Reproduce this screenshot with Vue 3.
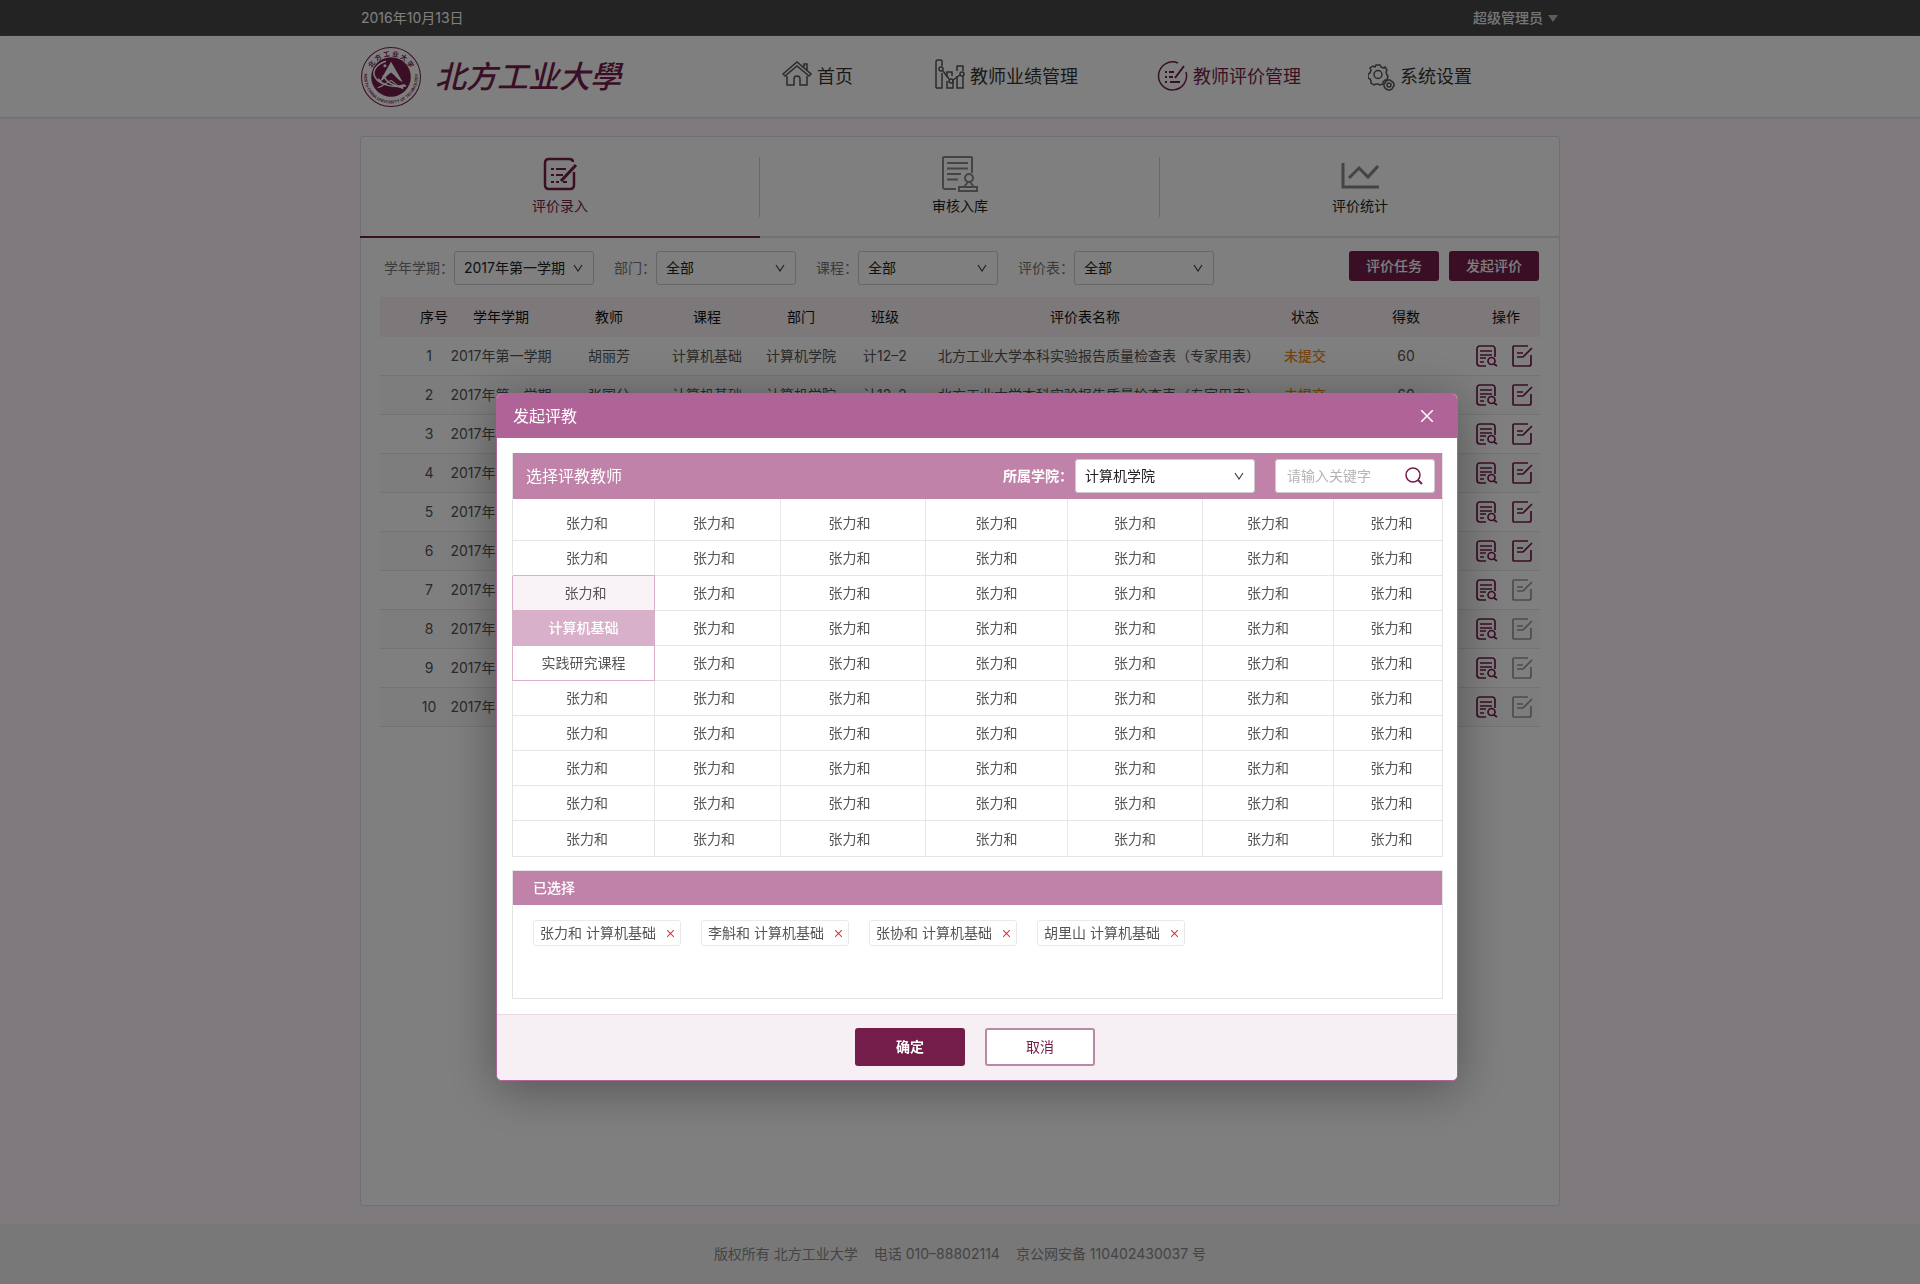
<script setup>
import { ref } from 'vue'

const nav = [
  { key: 'home', label: '首页' },
  { key: 'chart', label: '教师业绩管理' },
  { key: 'check', label: '教师评价管理', active: true },
  { key: 'gear', label: '系统设置' }
]

const filters = [
  { id: 'term', label: '学年学期：', value: '2017年第一学期' },
  { id: 'dept', label: '部门：', value: '全部' },
  { id: 'course', label: '课程：', value: '全部' },
  { id: 'form', label: '评价表：', value: '全部' }
]

const heads = ['序号', '学年学期', '教师', '课程', '部门', '班级', '评价表名称', '状态', '得数', '操作']
const detail = {
  course: '计算机基础',
  dept: '计算机学院',
  klass: '计12–2',
  form: '北方工业大学本科实验报告质量检查表（专家用表）',
  status: '未提交',
  score: 60
}
const records = [
  { teacher: '胡丽芳', ...detail },
  { teacher: '张国兮', ...detail }
]
const rows = Array.from({ length: 10 }, (_, i) => ({
  no: i + 1,
  term: '2017年第一学期',
  editable: i < 6,
  ...records[i]
}))

const grid = Array.from({ length: 10 }, () => Array(7).fill('张力和'))
grid[3][0] = '计算机基础'
grid[4][0] = '实践研究课程'
const cellClass = (r, c) => {
  if (c !== 0 || r < 2 || r > 4) return ''
  return ['menu open', 'menu current', 'menu'][r - 2]
}

const picked = ['张力和', '李斛和', '张协和', '胡里山']
const keyword = ref('')
</script>

<template>
  <div class="page">
    <div class="topbar">
      <div class="wrap topbar-in">
        <span>2016年10月13日</span>
        <button class="user" type="button">超级管理员<i class="caret"></i></button>
      </div>
    </div>

    <header class="header">
      <div class="wrap header-in">
        <a class="brand" href="#">
          <svg class="seal" viewBox="0 0 120 122">
            <defs>
              <path id="arc-top" d="M19 61a41 41 0 0 1 82 0" />
              <path id="arc-bottom" d="M8 50a53 53 0 1 0 104 0" />
            </defs>
            <circle cx="60" cy="61" r="58" fill="none" stroke="#741d4a" stroke-width="2" />
            <circle cx="60" cy="61" r="39" fill="#741d4a" />
            <path d="M60 31L38 70c8-3 12-10 16-13l6-5 6 5c4 4 8 10 17 14z" fill="#fff" />
            <path d="M50 30c-20 6-27 20-22 30 6 14 32 24 62 18M35 64c6 12 28 20 52 12M44 58c8 14 22 22 40 24" fill="none" stroke="#fff" stroke-width="3" />
            <path d="M34 82c14-4 18-12 26-14 8 4 12 12 24 16" fill="none" stroke="#fff" stroke-width="2" />
            <circle cx="48" cy="39" r="3" fill="#fff" />
            <text font-size="13" font-weight="700" fill="#741d4a"><textPath href="#arc-top" startOffset="50%" text-anchor="middle">北 方 工 业 大 学</textPath></text>
            <text font-size="8" font-weight="600" fill="#741d4a"><textPath href="#arc-bottom" startOffset="50%" text-anchor="middle">NORTH CHINA UNIVERSITY OF TECHNOLOGY</textPath></text>
          </svg>
          <span class="brand-name">北方工业大學</span>
        </a>
        <nav class="nav">
          <a v-for="n in nav" :key="n.key" href="#" :class="[n.key, { active: n.active }]">
            <svg v-if="n.key === 'home'" width="30" height="32" viewBox="0 0 30 32">
              <path d="M1 13L15 1l14 12-2 2L15 5 3 15zM22 6V3h3v6M5 15v9h7v-6a3 3 0 0 1 6 0v6h7v-9" />
            </svg>
            <svg v-else-if="n.key === 'chart'" width="30" height="36" viewBox="0 0 30 36">
              <path d="M1 29V3a2 2 0 0 1 2-2h3a1 1 0 0 1 1 1v5M7 14v15H1M12 18v-5h5v4M12 22v7h6v-7M22 12V7h6v5M22 17v12h6V17" />
              <circle cx="6" cy="10" r="2" /><circle cx="16" cy="22" r="2" /><circle cx="27" cy="15" r="2" />
              <path d="M8 12l6 8M18 21l7-5" />
            </svg>
            <svg v-else-if="n.key === 'check'" width="31" height="32" viewBox="0 0 31 32">
              <path d="M21 2A14 14 0 1 0 29 11" />
              <path d="M8 11h2M12 11h5M8 16h2M12 16h4M8 21h2M13 21h10M18 17L27 5" stroke-width="2" />
            </svg>
            <svg v-else width="27" height="27" viewBox="0 0 27 27">
              <path d="M8 1h4l1 2 2 1 2-1 2 3-1 2 1 3 1 1-1 4-2 0-2 2 0 2-3 1-2-1h-2l-2 1-3-2 0-2-1-2-2-1 0-4 2-1 1-3-1-2 3-2 2 1z" />
              <circle cx="10" cy="10.500" r="4" />
              <path d="M20 16h2l1 1 2 1 1 2v2l-1 1-1 2-2 1h-2l-2-1-1-1-1-2v-2l1-1 1-2z" />
              <circle cx="21" cy="21" r="2" />
            </svg>
            <span>{{ n.label }}</span>
          </a>
        </nav>
      </div>
    </header>

    <main class="wrap main">
      <section class="card">
        <div class="tabs">
          <a class="tab on" href="#">
            <svg width="36" height="36" viewBox="0 0 36 36" fill="none" stroke="#741d4a">
              <path d="M31 6Q31 3 27 3H7Q3 3 3 7v22q0 4 4 4h21q4 0 4-4V16" stroke-width="2.500" />
              <path d="M9 13h3M14 13h10M9 19h3M14 19h7M9 26h3M14 26h3M21 26h4" stroke-width="2" />
              <path d="M34 9L19 25" stroke-width="3" />
            </svg>
            <span>评价录入</span>
          </a>
          <a class="tab" href="#">
            <svg width="36" height="36" viewBox="0 0 36 36" fill="none" stroke="#888" stroke-width="2">
              <path d="M14 33H3q-2 0-2-2V2q0-1 1-1h27q1 0 1 1v15M5 7h21M5 12.500h21M5 18h14M5 23.500h11" />
              <circle cx="27" cy="22" r="4" />
              <path d="M26 26l-4 5M28 26l4 5M17 31h18v4H17z" />
            </svg>
            <span>审核入库</span>
          </a>
          <a class="tab" href="#">
            <svg width="38" height="36" viewBox="0 0 38 36" fill="none" stroke="#888" stroke-width="3">
              <path d="M2 7v24h36M8 22l10-10 9 9L37 10" />
            </svg>
            <span>评价统计</span>
          </a>
        </div>

        <div class="filters">
          <div v-for="f in filters" :key="f.id" class="field">
            <label :for="f.id">{{ f.label }}</label>
            <select :id="f.id"><option>{{ f.value }}</option></select>
          </div>
          <div class="actions">
            <button type="button">评价任务</button>
            <button type="button">发起评价</button>
          </div>
        </div>

        <table class="list">
          <colgroup>
            <col class="w1" /><col class="w2" /><col class="w3" /><col class="w4" /><col class="w5" />
            <col class="w6" /><col /><col class="w8" /><col class="w9" /><col class="w10" />
          </colgroup>
          <thead>
            <tr><th v-for="h in heads" :key="h">{{ h }}</th></tr>
          </thead>
          <tbody>
            <tr v-for="r in rows" :key="r.no">
              <td>{{ r.no }}</td>
              <td>{{ r.term }}</td>
              <td>{{ r.teacher }}</td>
              <td>{{ r.course }}</td>
              <td>{{ r.dept }}</td>
              <td>{{ r.klass }}</td>
              <td>{{ r.form }}</td>
              <td class="pending">{{ r.status }}</td>
              <td>{{ r.score }}</td>
              <td>
                <div class="ops">
                  <button type="button" aria-label="查看">
                    <svg width="22" height="22" viewBox="0 0 22 22">
                      <path d="M19 12V4q0-3-3-3H4Q1 1 1 4v14q0 3 3 3h6M4 6h12M4 10h12M4 13h6M4 17h4" />
                      <circle cx="15.500" cy="16" r="3.500" /><path d="M18 19l3 2" />
                    </svg>
                  </button>
                  <button type="button" aria-label="编辑" :class="{ off: !r.editable }">
                    <svg width="22" height="22" viewBox="0 0 22 22">
                      <path d="M16 1H2Q1 1 1 2v18q0 1 1 1h15q2 0 2-2V10M5 8h6M5 12h6L20 3" />
                    </svg>
                  </button>
                </div>
              </td>
            </tr>
          </tbody>
        </table>
      </section>
    </main>

    <footer class="footer">
      <span>版权所有 北方工业大学</span><span>电话 010–88802114</span><span>京公网安备 110402430037 号</span>
    </footer>

    <div class="mask">
      <div class="dialog" role="dialog" aria-labelledby="dialog-title">
        <div class="dialog-head">
          <h2 id="dialog-title">发起评教</h2>
          <button type="button" aria-label="关闭">
            <svg width="12" height="12" viewBox="0 0 12 12"><path d="M0 0l12 12M12 0L0 12" stroke="#fff" stroke-width="1.500" /></svg>
          </button>
        </div>

        <div class="dialog-body">
          <section class="panel">
            <div class="panel-head">
              <h3>选择评教教师</h3>
              <label for="college">所属学院：</label>
              <select id="college"><option>计算机学院</option></select>
              <div class="search">
                <input v-model="keyword" type="text" placeholder="请输入关键字" aria-label="请输入关键字" />
                <button type="button" aria-label="搜索">
                  <svg width="18" height="18" viewBox="0 0 18 18" fill="none" stroke="#741d4a">
                    <circle cx="8" cy="8" r="7" stroke-width="1.500" /><path d="M13 13l4 4" stroke-width="2" />
                  </svg>
                </button>
              </div>
            </div>
            <table class="pick">
              <colgroup>
                <col class="p1" /><col class="p2" /><col class="p3" /><col class="p4" /><col class="p5" /><col class="p6" /><col />
              </colgroup>
              <tbody>
                <tr v-for="(line, r) in grid" :key="r">
                  <td v-for="(name, c) in line" :key="c" :class="cellClass(r, c)">{{ name }}</td>
                </tr>
              </tbody>
            </table>
          </section>

          <section class="panel chosen">
            <h3>已选择</h3>
            <ul>
              <li v-for="p in picked" :key="p">
                <span>{{ p }} 计算机基础</span>
                <button type="button" aria-label="移除">
                  <svg width="7" height="7" viewBox="0 0 8 8"><path d="M0 0l8 8M8 0L0 8" stroke="#dd3438" stroke-width="1.200" /></svg>
                </button>
              </li>
            </ul>
          </section>
        </div>

        <div class="dialog-foot">
          <button class="ok" type="button">确定</button>
          <button class="cancel" type="button">取消</button>
        </div>
      </div>
    </div>
  </div>
</template>

<style>
body {
  margin: 0;
  background: #faf3fa;
}
</style>

<style scoped>
.page {
  display: flex;
  flex-direction: column;
  min-height: 100vh;
  font: 14px/20px Inter, "Noto Sans CJK SC", sans-serif;
  color: #555;
}
.page *,
.page *::before {
  box-sizing: border-box;
}
button,
input,
select {
  font: inherit;
}
button {
  padding: 0;
  border: 0;
  background: none;
}
a {
  color: inherit;
  text-decoration: none;
}
h2,
h3 {
  margin: 0;
  font-size: 16px;
  font-weight: 400;
  color: #fff;
}
svg {
  display: block;
}
.wrap {
  width: 100%;
  max-width: 1200px;
  margin: 0 auto;
}

.topbar {
  background: #464646;
  color: #fff;
}
.topbar-in {
  display: flex;
  justify-content: space-between;
  align-items: center;
  height: 36px;
  padding: 0 2px 0 1px;
}
.user {
  display: flex;
  align-items: center;
  gap: 5px;
  color: #eee;
  font-weight: 500;
}
.caret {
  border: 5px solid transparent;
  border-top: 7px solid #bbb;
  border-bottom: 0;
}

.header {
  height: 81px;
  background: #fff;
  box-shadow: 0 1px 2px #ddd3dd;
}
.header-in {
  display: flex;
  align-items: center;
  height: 82px;
}
.brand {
  display: flex;
  align-items: center;
  gap: 13px;
}
.seal {
  width: 62px;
  height: 62px;
}
.brand-name {
  font-size: 31px;
  line-height: 40px;
  font-style: italic;
  font-weight: 500;
  color: #741d4a;
}
.nav {
  display: flex;
  flex: 1;
  justify-content: flex-end;
  padding-right: 88px;
}
.nav a {
  display: flex;
  align-items: center;
  gap: 5px;
  font-size: 18px;
  line-height: 30px;
  color: #333;
}
.nav .chart {
  margin-left: 82px;
}
.nav .check {
  margin-left: 79px;
}
.nav .gear {
  margin-left: 67px;
}
.nav svg {
  fill: none;
  stroke: #555;
  stroke-width: 1.500;
}
.nav .active {
  color: #741d4a;
}
.nav .active svg {
  stroke: #741d4a;
}

.main {
  display: flex;
  flex: 1;
  padding: 19px 0 18px;
}
.card {
  width: 100%;
  border: 1px solid #e6dce6;
  border-radius: 3px;
  background: #fff;
}
.tabs {
  display: flex;
  margin: 0 -1px;
  border-bottom: 2px solid #e4e4e4;
}
.tab {
  display: flex;
  flex: 1;
  flex-direction: column;
  align-items: center;
  gap: 4px;
  position: relative;
  height: 99px;
  padding-top: 19px;
  color: #222;
}
.tab + .tab::before {
  content: "";
  position: absolute;
  left: -1px;
  top: 20px;
  height: 60px;
  border-left: 1px solid #d0d0d0;
}
.tab.on {
  height: 101px;
  margin-bottom: -2px;
  border-bottom: 2px solid #741d4a;
  color: #741d4a;
}

.filters {
  display: flex;
  align-items: flex-start;
  gap: 20px;
  padding: 13px 20px 12px 23px;
}
.field {
  display: flex;
  align-items: center;
}
.field label {
  color: #777;
}
select {
  width: 140px;
  height: 34px;
  padding: 0 24px 0 9px;
  border: 1px solid #ccc;
  border-radius: 3px;
  appearance: none;
  background: #fff url("data:image/svg+xml,%3Csvg xmlns='http://www.w3.org/2000/svg' width='10' height='8' viewBox='0 0 10 8'%3E%3Cpath d='M1 1l4 6 4-6' fill='none' stroke='%23444' stroke-width='1.2'/%3E%3C/svg%3E") no-repeat right 10px center;
  color: #222;
}
.actions {
  display: flex;
  gap: 10px;
  margin-left: auto;
}
.actions button {
  width: 90px;
  height: 30px;
  border-radius: 3px;
  background: #741d4a;
  color: #fff;
  font-weight: 500;
}

table {
  width: 100%;
  table-layout: fixed;
  border-collapse: separate;
  border-spacing: 0;
}
th,
td {
  padding: 0;
  text-align: center;
  white-space: nowrap;
}
.list {
  width: calc(100% - 38px);
  margin: 0 19px;
}
.w1 { width: 66px; }
.w2 { width: 110px; }
.w3 { width: 106px; }
.w4 { width: 90px; }
.w5 { width: 98px; }
.w6 { width: 70px; }
.w8 { width: 86px; }
.w9 { width: 116px; }
.w10 { width: 76px; }
.list th {
  height: 40px;
  background: #faf3f6;
  color: #111;
  font-weight: 400;
}
.list td {
  height: 39px;
  border-bottom: 1px solid #e6e6e6;
}
.list tr:nth-child(even) td {
  background: #fcfafb;
}
.list th:first-child {
  padding-left: 40px;
}
.list td:first-child {
  padding-left: 32px;
}
.list th:nth-child(7) {
  padding-right: 12px;
}
.list th:last-child {
  padding-left: 8px;
}
.list td:nth-child(7) {
  padding-left: 18px;
  text-align: left;
}
.list .pending {
  color: #e88a1c;
  font-weight: 500;
}
.ops {
  display: flex;
  justify-content: center;
  gap: 14px;
  padding-left: 6px;
}
.ops svg {
  fill: none;
  stroke: #741d4a;
  stroke-width: 1.700;
}
.ops .off svg {
  stroke: #999;
}

.footer {
  display: flex;
  justify-content: center;
  align-items: center;
  gap: 16px;
  height: 60px;
  background: #f0f0f0;
  color: #888;
}

.mask {
  display: flex;
  justify-content: center;
  align-items: flex-start;
  position: fixed;
  inset: 0;
  overflow: auto;
  padding: 393px 0 40px 34px;
  background: rgba(0, 0, 0, 0.5);
  scrollbar-width: none;
}
.dialog {
  width: 100%;
  max-width: 962px;
  border: 1px solid #b06397;
  border-radius: 6px;
  overflow: hidden;
  background: #fff;
  box-shadow: 0 8px 50px rgba(0, 0, 0, 0.35);
}
.dialog-head {
  display: flex;
  align-items: center;
  justify-content: space-between;
  height: 44px;
  padding: 0 24px 0 16px;
  background: #b06397;
}
.dialog-body {
  padding: 15px 14px 15px 15px;
}
.panel {
  border: 1px solid #e4e4e4;
  border-top: 0;
}
.panel-head {
  display: flex;
  align-items: center;
  height: 46px;
  padding: 0 7px 0 13px;
  background: #c182aa;
}
.panel-head h3 {
  flex: 1;
}
.panel-head label {
  margin-right: 2px;
  color: #fff;
  font-weight: 700;
}
.panel-head select {
  width: 180px;
}
.search {
  display: flex;
  align-items: center;
  width: 160px;
  height: 34px;
  margin-left: 20px;
  padding: 0 11px;
  border: 1px solid #ccc;
  border-radius: 3px;
  background: #fff;
}
.search input {
  flex: 1;
  min-width: 0;
  padding: 0;
  border: 0;
  outline: 0;
  background: none;
}
.search input::placeholder {
  color: #b5b5b5;
}
.p1 { width: 142px; }
.p2 { width: 126px; }
.p3 { width: 145px; }
.p4 { width: 142px; }
.p5 { width: 135px; }
.p6 { width: 131px; }
.pick td {
  height: 35px;
  border-right: 1px solid #e6e6e6;
  border-bottom: 1px solid #e6e6e6;
}
.pick tr:first-child td {
  height: 42px;
  padding-top: 7px;
}
.pick td:first-child,
.pick td:last-child {
  padding-left: 7px;
}
.pick td:nth-child(2),
.pick td:nth-child(3) {
  padding-right: 7px;
}
.pick td:last-child {
  border-right: 0;
}
.pick tr:last-child td {
  border-bottom: 0;
}
.pick td.menu {
  padding: 0;
  border-color: #d8b0ca;
  box-shadow: -1px 0 #d8b0ca;
}
.pick td.open {
  padding-left: 4px;
  background: #f9f3f7;
  box-shadow: -1px 0 #d8b0ca, 0 -1px #d8b0ca;
}
.pick td.current {
  background: #d8b0ca;
  color: #fff;
  font-weight: 500;
}
.chosen {
  min-height: 129px;
  margin-top: 13px;
  border-top: 1px solid #e4e4e4;
}
.chosen h3 {
  padding: 7px 20px;
  background: #c182aa;
  font-size: 14px;
  line-height: 20px;
  font-weight: 500;
}
.chosen ul {
  display: flex;
  flex-wrap: wrap;
  gap: 20px;
  margin: 0;
  padding: 15px 20px;
  list-style: none;
}
.chosen li {
  display: flex;
  align-items: center;
  justify-content: space-between;
  width: 148px;
  height: 26px;
  padding: 0 6px;
  border: 1px solid #e9e9e9;
  border-radius: 3px;
}
.dialog-foot {
  display: flex;
  justify-content: center;
  gap: 20px;
  padding: 13px 4px 14px 0;
  border-top: 1px solid #ead6e4;
  background: #f6f0f4;
}
.dialog-foot button {
  width: 110px;
  height: 38px;
  border-radius: 3px;
}
.dialog-foot .ok {
  background: #741d4a;
  color: #fff;
  font-weight: 700;
}
.dialog-foot .cancel {
  border: 2px solid #b98aa5;
  background: #fff;
  color: #741d4a;
}
</style>
